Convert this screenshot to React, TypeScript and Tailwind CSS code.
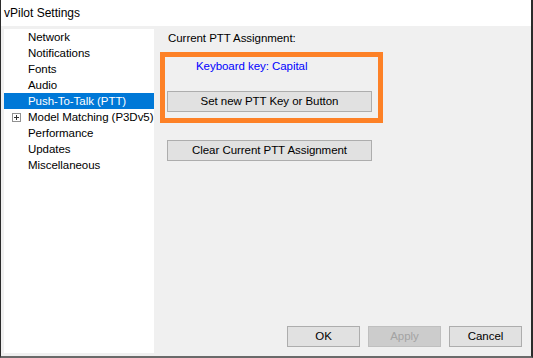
import type { ReactNode } from 'react'

const font = { fontFamily: '"Liberation Sans", Arial, sans-serif' }

const treeItems = [
  { label: 'Network' },
  { label: 'Notifications' },
  { label: 'Fonts' },
  { label: 'Audio' },
  { label: 'Push-To-Talk (PTT)', selected: true },
  { label: 'Model Matching (P3Dv5)', expandable: true },
  { label: 'Performance' },
  { label: 'Updates' },
  { label: 'Miscellaneous' },
]

function Btn({ children, className = '', disabled = false }: { children: ReactNode; className?: string; disabled?: boolean }) {
  return (
    <button
      disabled={disabled}
      className={`h-[21px] border leading-none ${disabled ? 'bg-[#cccccc] border-[#bfbfbf] text-[#a3a3a3]' : 'bg-[#e1e1e1] border-[#adadad] text-black'} ${className}`}
    >
      {children}
    </button>
  )
}

export default function App() {
  return (
    <div style={font} className="w-[533px] h-[358px] flex flex-col bg-[#f0f0f0] border-l border-l-[#2b2b2b] border-r-2 border-r-[#2b2b2b] border-b-2 border-b-[#6a6a6a] text-[11.5px] tracking-[-0.05px] text-black">
      {/* title bar */}
      <div className="h-[26px] shrink-0 bg-white flex items-center pl-[3px] text-[12px] tracking-normal">vPilot Settings</div>

      <div className="flex-1 flex p-[3px] min-h-0">
        {/* tree */}
        <div className="w-[150px] bg-white flex flex-col">
          {treeItems.map(item => (
            <div
              key={item.label}
              className={`relative h-[16px] flex items-center pl-[24px] pt-[1px] leading-none whitespace-nowrap ${item.selected ? 'bg-[#0078d7] text-white' : ''}`}
            >
              {item.expandable && (
                <span className="absolute left-[8px] top-[4px] w-[9px] h-[9px] border border-[#919191] flex items-center justify-center">
                  <svg width="7" height="7" viewBox="0 0 7 7">
                    <path d="M1 3.5h5M3.5 1v5" stroke="#333" strokeWidth="1" />
                  </svg>
                </span>
              )}
              {item.label}
            </div>
          ))}
        </div>

        {/* page */}
        <div className="relative flex-1 flex flex-col pl-[13px] pr-[6px]">
          <div className="mt-[2px] pl-[1px] h-[16px] flex items-center">Current PTT Assignment:</div>
          <div className="mt-[12px] pl-[29px] h-[16px] flex items-center text-[#0000ff]">Keyboard key: Capital</div>
          <Btn className="mt-[16px] w-[205px]">Set new PTT Key or Button</Btn>
          <Btn className="mt-[28px] w-[205px]">Clear Current PTT Assignment</Btn>

          <div className="mt-auto mb-[6px] flex justify-end gap-[8px]">
            <Btn className="w-[73px]">OK</Btn>
            <Btn className="w-[73px]" disabled>Apply</Btn>
            <Btn className="w-[73px]">Cancel</Btn>
          </div>

          {/* highlight annotation */}
          <div className="absolute left-[6px] top-[23px] w-[223px] h-[71px] border-[5px] border-[#fd8127] pointer-events-none" />
        </div>
      </div>
    </div>
  )
}
